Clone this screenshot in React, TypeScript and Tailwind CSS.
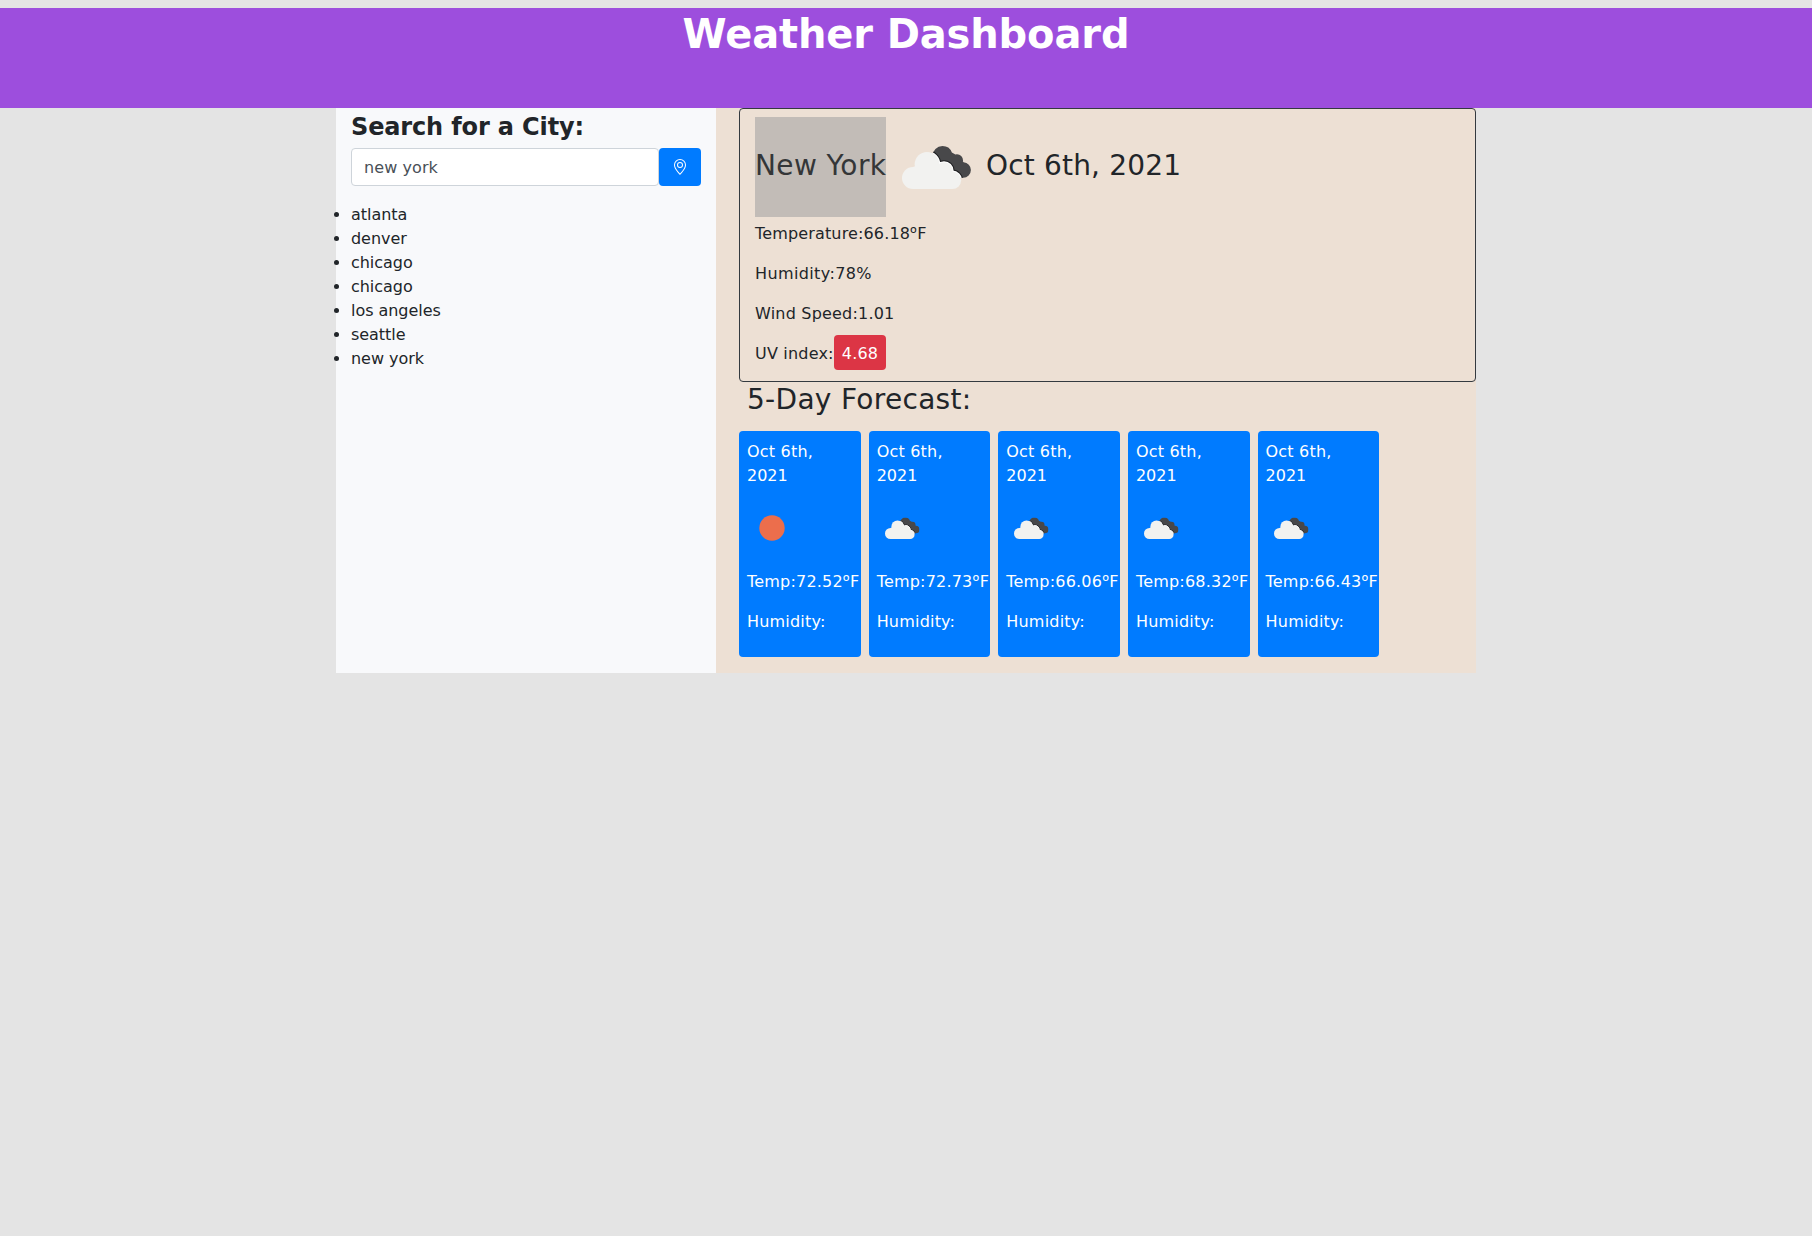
import React from "react";
import { BsGeoAlt } from "react-icons/bs";

const cities = ["atlanta", "denver", "chicago", "chicago", "los angeles", "seattle", "new york"];

const forecast = [
  { temp: "72.52", sunny: true },
  { temp: "72.73", sunny: false },
  { temp: "66.06", sunny: false },
  { temp: "68.32", sunny: false },
  { temp: "66.43", sunny: false },
];

function LightCloud() {
  return (
    <>
      <circle cx="27" cy="61" r="11" />
      <circle cx="41" cy="47.3" r="12.3" />
      <circle cx="58" cy="53.8" r="8.6" />
      <circle cx="66.4" cy="63.3" r="8.7" />
      <path d="M27 50 L41 45 L58 52 L66.4 60 V72 H27 Z" />
    </>
  );
}

function CloudIcon({ size, id }: { size: number; id: string }) {
  return (
    <svg width={size} height={size} viewBox="0 0 100 100" className="block shrink-0">
      <defs>
        <clipPath id={id}>
          <circle cx="56.5" cy="39" r="10" />
          <circle cx="71" cy="43.3" r="6" />
          <circle cx="77.2" cy="53" r="7.7" />
          <path d="M50 40 L58 31 L72 39 L80 48 L77 60.7 L68 62 L48 50 Z" />
        </clipPath>
      </defs>
      <g clipPath={`url(#${id})`}>
        <rect width="100" height="100" fill="#48484a" />
        <g fill="#202022" stroke="#202022" strokeWidth="4">
          <LightCloud />
        </g>
        <g fill="#ffffff" stroke="#ffffff" strokeWidth="2">
          <LightCloud />
        </g>
      </g>
      <g fill="#f2f2f0">
        <LightCloud />
      </g>
    </svg>
  );
}

function SunIcon() {
  return (
    <svg width="50" height="50" viewBox="0 0 50 50" className="block">
      <circle cx="25" cy="25" r="12.7" fill="#ec6e4c" />
    </svg>
  );
}

function Degree() {
  return (
    <span className="inline-block w-[7.2px] align-[-1px] font-['Noto_Sans',sans-serif] text-lg leading-none tracking-normal">
      º
    </span>
  );
}

export default function App() {
  return (
    <div className="min-h-[1236px] bg-[#e4e4e4] pt-2 font-['DejaVu_Sans',sans-serif] text-base leading-6 text-[#212529]">
      <header className="h-[100px] bg-[#9d4edd] pt-0.5 text-center">
        <h1 className="text-[40px] leading-[48px] font-bold tracking-[-0.14px] text-white">Weather Dashboard</h1>
      </header>

      <div className="mx-auto flex h-[565px] w-[1140px]">
        <aside className="w-[380px] bg-[#f8f9fb] px-[15px] pt-[5px]">
          <h4 className="h-[35px] text-2xl leading-[29px] font-bold tracking-[-0.14px] whitespace-nowrap">Search for a City:</h4>
          <div className="flex h-[38px]">
            <input
              className="w-[308px] rounded border border-[#ced4da] bg-white px-3 pt-0.5 tracking-[0.08px] text-[#495057] outline-none"
              defaultValue="new york"
            />
            <button className="flex w-[42px] items-center justify-center rounded bg-[#007bff] text-white">
              <BsGeoAlt size={16} />
            </button>
          </div>
          <ul className="mt-[17px] list-disc tracking-[-0.04px]">
            {cities.map((city, i) => (
              <li key={i}>{city}</li>
            ))}
          </ul>
        </aside>

        <main className="flex-1 bg-[#ede0d4] pl-[23px]">
          <section className="h-[274px] rounded border border-[#343a40] px-[15px] pt-2">
            <div className="flex h-[100px] text-[28px] leading-[34px] whitespace-nowrap">
              <h3 className="h-[100px] w-[131px] bg-[#c2bcb7] pt-8 tracking-[0.4px] text-[#343638]">New York</h3>
              <CloudIcon size={100} id="current" />
              <h3 className="pt-8 tracking-[0.17px]">Oct 6th, 2021</h3>
            </div>
            <div className="mt-[5px] flex flex-col gap-4 tracking-[0.2px]">
              <p className="h-6 tracking-[0.15px]">
                Temperature:66.18
                <Degree />F
              </p>
              <p className="tracking-[0.38px]">Humidity:78%</p>
              <p>Wind Speed:1.01</p>
              <p className="flex">
                <span className="w-[79px]">UV index:</span>
                <span className="-mt-[7px] -mb-[5px] flex h-[35px] w-[52px] items-center justify-center rounded bg-[#dc3545] pt-0.5 text-white">
                  4.68
                </span>
              </p>
            </div>
          </section>

          <h3 className="h-[49px] pt-px pl-2 text-[28px] leading-[34px] tracking-[0.3px]">5-Day Forecast:</h3>
          <div className="flex gap-2">
            {forecast.map((day, i) => (
              <article
                key={i}
                className="flex h-[226px] w-[121.65px] flex-col rounded bg-[#007bff] px-2 pt-[9px] tracking-[0.2px] whitespace-nowrap text-white"
              >
                <p>
                  Oct 6th,
                  <br />
                  <span className="tracking-normal">2021</span>
                </p>
                <div className="mt-[15px] mb-[17px]">
                  {day.sunny ? <SunIcon /> : <CloudIcon size={50} id={`day-${i}`} />}
                </div>
                <p className="h-6">
                  Temp:{day.temp}
                  <Degree />F
                </p>
                <p className="mt-4">Humidity:</p>
              </article>
            ))}
          </div>
        </main>
      </div>
    </div>
  );
}
